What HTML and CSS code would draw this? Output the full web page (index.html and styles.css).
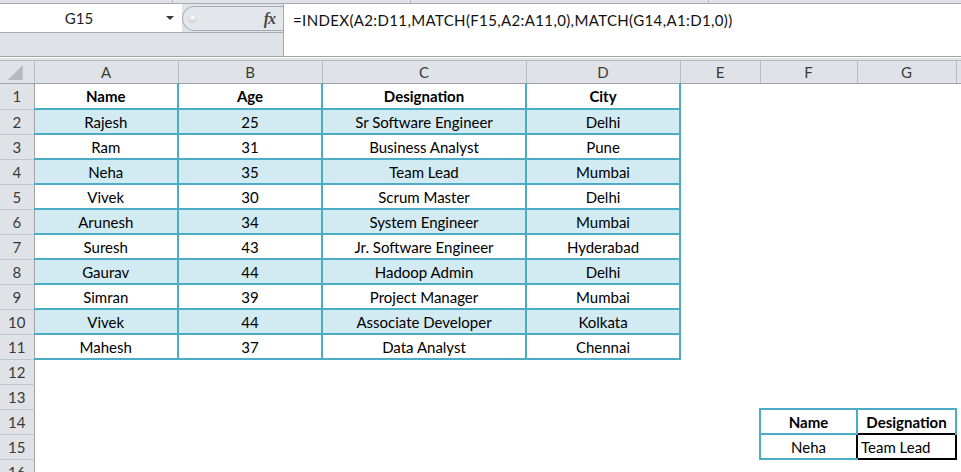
FILE: index.html
```html
<!DOCTYPE html>
<html lang="en">
<head>
    <meta charset="UTF-8">
    <title>INDEX MATCH</title>
    <link rel="stylesheet" href="styles.css">
</head>
<body>
    <div class="strip">
        <span style="width:172px"></span>
        <span style="width:237px"></span>
        <span style="width:297px"></span>
    </div>

    <div class="fbar">
        <div class="fbar-left">
            <div class="fbar-top">
                <div class="namebox">
                    <span class="name">G15</span>
                    <span class="arrow"></span>
                </div>
                <div class="grip">
                    <span class="knob"></span>
                    <span class="fx">fx</span>
                </div>
            </div>
        </div>
        <div class="formula">=INDEX(A2:D11,MATCH(F15,A2:A11,0),MATCH(G14,A1:D1,0))</div>
    </div>
    <div class="gap"></div>

    <table class="sheet">
        <colgroup>
            <col style="width:34px">
            <col style="width:144px">
            <col style="width:144px">
            <col style="width:204px">
            <col style="width:154px">
            <col style="width:80px">
            <col style="width:97px">
            <col style="width:99px">
            <col style="width:104px">
        </colgroup>
        <tr class="hdr">
            <th class="corner"><span class="tri"></span></th>
            <th>A</th><th>B</th><th>C</th><th>D</th><th>E</th><th>F</th><th>G</th><th></th>
        </tr>
        <tr class="head first">
            <th class="rn">1</th>
            <td class="t">Name</td><td class="t">Age</td><td class="t">Designation</td><td class="t">City</td>
            <td></td><td></td><td></td><td></td>
        </tr>
        <tr class="band">
            <th class="rn">2</th>
            <td class="t">Rajesh</td><td class="t">25</td><td class="t">Sr Software Engineer</td><td class="t">Delhi</td>
            <td></td><td></td><td></td><td></td>
        </tr>
        <tr>
            <th class="rn">3</th>
            <td class="t">Ram</td><td class="t">31</td><td class="t">Business Analyst</td><td class="t">Pune</td>
            <td></td><td></td><td></td><td></td>
        </tr>
        <tr class="band">
            <th class="rn">4</th>
            <td class="t">Neha</td><td class="t">35</td><td class="t">Team Lead</td><td class="t">Mumbai</td>
            <td></td><td></td><td></td><td></td>
        </tr>
        <tr>
            <th class="rn">5</th>
            <td class="t">Vivek</td><td class="t">30</td><td class="t">Scrum Master</td><td class="t">Delhi</td>
            <td></td><td></td><td></td><td></td>
        </tr>
        <tr class="band">
            <th class="rn">6</th>
            <td class="t">Arunesh</td><td class="t">34</td><td class="t">System Engineer</td><td class="t">Mumbai</td>
            <td></td><td></td><td></td><td></td>
        </tr>
        <tr>
            <th class="rn">7</th>
            <td class="t">Suresh</td><td class="t">43</td><td class="t">Jr. Software Engineer</td><td class="t">Hyderabad</td>
            <td></td><td></td><td></td><td></td>
        </tr>
        <tr class="band">
            <th class="rn">8</th>
            <td class="t">Gaurav</td><td class="t">44</td><td class="t">Hadoop Admin</td><td class="t">Delhi</td>
            <td></td><td></td><td></td><td></td>
        </tr>
        <tr>
            <th class="rn">9</th>
            <td class="t">Simran</td><td class="t">39</td><td class="t">Project Manager</td><td class="t">Mumbai</td>
            <td></td><td></td><td></td><td></td>
        </tr>
        <tr class="band">
            <th class="rn">10</th>
            <td class="t">Vivek</td><td class="t">44</td><td class="t">Associate Developer</td><td class="t">Kolkata</td>
            <td></td><td></td><td></td><td></td>
        </tr>
        <tr>
            <th class="rn">11</th>
            <td class="t">Mahesh</td><td class="t">37</td><td class="t">Data Analyst</td><td class="t">Chennai</td>
            <td></td><td></td><td></td><td></td>
        </tr>
        <tr>
            <th class="rn">12</th>
            <td></td><td></td><td></td><td></td><td></td><td></td><td></td><td></td>
        </tr>
        <tr>
            <th class="rn">13</th>
            <td></td><td></td><td></td><td></td><td></td><td></td><td></td><td></td>
        </tr>
        <tr class="head">
            <th class="rn">14</th>
            <td></td><td></td><td></td><td></td><td></td>
            <td class="k">Name</td><td class="k no-bottom">Designation</td><td></td>
        </tr>
        <tr>
            <th class="rn">15</th>
            <td></td><td></td><td></td><td></td><td></td>
            <td class="k no-right">Neha</td><td class="sel">Team Lead</td><td></td>
        </tr>
        <tr>
            <th class="rn">16</th>
            <td></td><td></td><td></td><td></td><td></td><td></td><td></td><td></td>
        </tr>
    </table>
</body>
</html>
```

FILE: styles.css
```css
body {
    margin: 0;
    width: 961px;
    height: 472px;
    overflow: hidden;
    background: #fff;
    font-family: Lato, "Open Sans", sans-serif;
    font-size: 15px;
    color: #000;
}

/* top ribbon edge */
.strip {
    height: 3px;
    background: #dfe3e8;
    border-bottom: 1px solid #a7abb0;
    display: flex;
}

.strip span {
    border-right: 1px solid #b3b7bc;
}

/* formula bar */
.fbar {
    display: flex;
    height: 52px;
    background: #dfe3e8;
    border-bottom: 1px solid #a0a4a9;
}

.fbar-left {
    width: 283px;
}

.fbar-top {
    display: flex;
    height: 28px;
    border-bottom: 1px solid #a7abb0;
}

.namebox {
    width: 182px;
    background: #fff;
    display: flex;
    align-items: center;
}

.name {
    flex: 1;
    text-align: center;
    padding-right: 8px;
    color: #1e1e1e;
}

.arrow {
    width: 0;
    height: 0;
    border-left: 4px solid transparent;
    border-right: 4px solid transparent;
    border-top: 4px solid #3a3a3a;
    margin-right: 8px;
}

.grip {
    flex: 1;
    display: flex;
    align-items: center;
    justify-content: space-between;
    margin: 2px 0 1px;
    border: 1px solid #a7abb0;
    border-right: none;
    border-radius: 13px 0 0 13px;
    background: #e3e6ea;
}

.knob {
    width: 9px;
    height: 9px;
    margin-left: 5px;
    border-radius: 50%;
    background: radial-gradient(circle at 50% 35%, #ffffff 0%, #d6d8db 60%, #b9bcc0 100%);
}

.fx {
    font-family: "Liberation Serif", serif;
    font-style: italic;
    font-weight: bold;
    font-size: 16px;
    color: #4a4a4a;
    margin-right: 8px;
    letter-spacing: -1px;
}

.formula {
    flex: 1;
    background: #fff;
    border-left: 1px solid #a7abb0;
    padding: 7px 0 0 9px;
    color: #111;
    letter-spacing: 0.37px;
}

.gap {
    height: 2px;
    background: #dfe3e8;
    border-top: 1px solid #fff;
    border-bottom: 1px solid #b5b9be;
}

/* grid */
.sheet {
    border-collapse: collapse;
    table-layout: fixed;
    width: 1060px;
}

.sheet td,
.sheet th {
    padding: 0;
    height: 24px;
    text-align: center;
    white-space: nowrap;
    overflow: hidden;
    font-weight: normal;
}

.hdr th {
    height: 22px;
    background: #dfe3e8;
    color: #3a3a3a;
    border-right: 1px solid #b8bcc1;
    border-bottom: 1px solid #9ea2a7;
}

.corner {
    text-align: right;
    vertical-align: bottom;
}

.tri {
    display: inline-block;
    width: 15px;
    height: 15px;
    margin: 0 3px 3px 0;
    background: #b6babf;
    clip-path: polygon(100% 0, 100% 100%, 0 100%);
    vertical-align: bottom;
}

.rn {
    background: #dfe3e8;
    color: #3a3a3a;
    border-right: 1px solid #9ea2a7;
    border-bottom: 1px solid #c2c6cb;
}

.sheet td.t {
    height: 23px;
    border-right: 2px solid #4bacc6;
    border-bottom: 2px solid #4bacc6;
}

.sheet .first td.t {
    height: 24px;
}

.band td.t {
    background: #d2eaf1;
}

.head td {
    font-weight: bold;
}

.sheet td.k {
    height: 23px;
    border: 2px solid #4bacc6;
}

.sheet td.no-right {
    border-right: none;
}

.sheet td.no-bottom {
    border-bottom: none;
}

.sheet td.sel {
    height: 23px;
    border: 2px solid #000;
    text-align: left;
    padding-left: 3px;
}
```
